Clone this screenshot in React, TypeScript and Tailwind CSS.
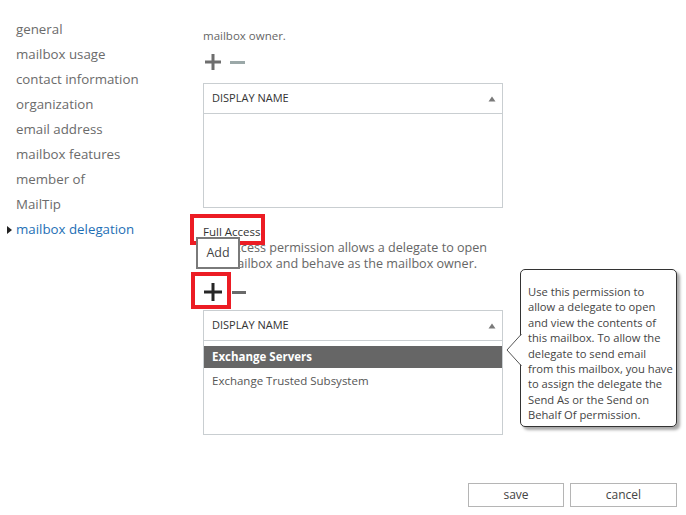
import React from "react";

const navItems = [
  "general",
  "mailbox usage",
  "contact information",
  "organization",
  "email address",
  "mailbox features",
  "member of",
  "MailTip",
];

const tipLines = [
  "Use this permission to",
  "allow a delegate to open",
  "and view the contents of",
  "this mailbox. To allow the",
  "delegate to send email",
  "from this mailbox, you have",
  "to assign the delegate the",
  "Send As or the Send on",
  "Behalf Of permission.",
];

function SortUp() {
  return (
    <svg width="8" height="6" viewBox="0 0 8 6" className="block">
      <path d="M4 0.5 L7.5 5.5 L0.5 5.5 Z" fill="#7a7a7a" />
    </svg>
  );
}

function Table({ children }: { children?: React.ReactNode }) {
  return (
    <div className="w-[300px] h-[125px] border border-[#c9ced1] bg-white flex flex-col">
      <div className="h-[30px] border-b border-[#c9ced1] flex items-center justify-between pl-[8px] pr-[6px] shrink-0">
        <span className="text-[11px] text-[#333]">DISPLAY NAME</span>
        <SortUp />
      </div>
      <div className="flex flex-col pt-[5px]">{children}</div>
    </div>
  );
}

function Plus({ color, size = 16, stroke = 3 }: { color: string; size?: number; stroke?: number }) {
  return (
    <svg width={size} height={size} viewBox={`0 0 ${size} ${size}`} className="block">
      <rect x={(size - stroke) / 2} y="0" width={stroke} height={size} fill={color} />
      <rect x="0" y={(size - stroke) / 2} width={size} height={stroke} fill={color} />
    </svg>
  );
}

function Minus({ color, w = 15, stroke = 3 }: { color: string; w?: number; stroke?: number }) {
  return (
    <svg width={w} height={stroke} viewBox={`0 0 ${w} ${stroke}`} className="block">
      <rect x="0" y="0" width={w} height={stroke} fill={color} />
    </svg>
  );
}

export default function App() {
  return (
    <div
      className="relative w-[686px] h-[515px] bg-white overflow-hidden flex"
      style={{ fontFamily: '"Open Sans", "Noto Sans", sans-serif' }}
    >
      {/* left nav */}
      <nav className="w-[203px] shrink-0 pt-[17px] flex flex-col">
        {navItems.map((n) => (
          <div key={n} className="h-[25px] flex items-center pl-[16px] text-[13.3px] text-[#6b6b6b] whitespace-nowrap">
            {n}
          </div>
        ))}
        <div className="h-[25px] flex items-center pl-[7px] text-[13.3px] text-[#1e6fb5] whitespace-nowrap">
          <svg width="5" height="8" viewBox="0 0 5 8" className="mr-[4px]">
            <path d="M0 0 L5 4 L0 8 Z" fill="#222" />
          </svg>
          mailbox delegation
        </div>
      </nav>

      {/* main */}
      <div className="flex flex-col flex-1">
        <div className="pt-[28px] text-[11.5px] leading-[16px] text-[#666]">mailbox owner.</div>
        <div className="flex items-center gap-[9px] mt-[10px] h-[16px] pl-[2px]">
          <Plus color="#6e6e6e" />
          <Minus color="#9ba8a8" />
        </div>
        <div className="mt-[13px]">
          <Table />
        </div>

        <div className="mt-[16px] text-[11.5px] leading-[16px] text-[#333]">Full Access</div>
        <div className="text-[12.6px] leading-[16px] text-[#666] whitespace-nowrap">
          Full Access permission allows a delegate to open
          <br />
          the mailbox and behave as the mailbox owner.
        </div>
        <div className="flex items-center mt-[12px] h-[16px] pl-[1px]">
          <Plus color="#262626" size={18} />
          <div className="ml-[10px]">
            <Minus color="#6a6a6a" w={14} />
          </div>
        </div>
        <div className="mt-[10px]">
          <Table>
            <div className="h-[22px] bg-[#666] flex items-center pl-[8px] text-[11.5px] font-bold text-white">
              Exchange Servers
            </div>
            <div className="h-[25px] flex items-center pl-[8px] text-[11.5px] text-[#555]">
              Exchange Trusted Subsystem
            </div>
          </Table>
        </div>

        <div className="flex-1" />
        <div className="flex justify-end gap-[6px] pr-[9px] pb-[8px]">
          <button className="w-[96px] h-[24px] border border-[#b5b5b5] bg-white text-[12px] text-[#444]">
            save
          </button>
          <button className="w-[107px] h-[24px] border border-[#b5b5b5] bg-white text-[12px] text-[#444]">
            cancel
          </button>
        </div>
      </div>

      {/* annotation overlays */}
      <div className="absolute left-[190px] top-[214px] w-[75px] h-[31px] border-[4px] border-[#ec1c24]" />
      <div className="absolute left-[196px] top-[237px] w-[44px] h-[32px] border-2 border-[#7a7a7a] bg-white flex items-center justify-center text-[12.5px] text-[#444]">
        Add
      </div>
      <div className="absolute left-[191px] top-[272px] w-[40px] h-[37px] border-[4px] border-[#ec1c24]" />

      {/* tooltip */}
      <div className="absolute left-[520px] top-[269px] w-[157px] h-[158px] bg-white border border-[#333] rounded-[5px] shadow-[3px_3px_3px_rgba(0,0,0,0.35)] pl-[7px] pt-[14px] text-[11.2px] leading-[15.4px] text-[#444] whitespace-nowrap">
        {tipLines.map((l) => (
          <div key={l}>{l}</div>
        ))}
        <svg width="16" height="32" viewBox="0 0 16 32" className="absolute left-[-15px] top-[64px]">
          <path d="M16 0 L1 16 L16 32 Z" fill="#fff" />
          <path d="M15.5 0 L1 16 L15.5 32" fill="none" stroke="#555" strokeWidth="1" />
        </svg>
      </div>
    </div>
  );
}
